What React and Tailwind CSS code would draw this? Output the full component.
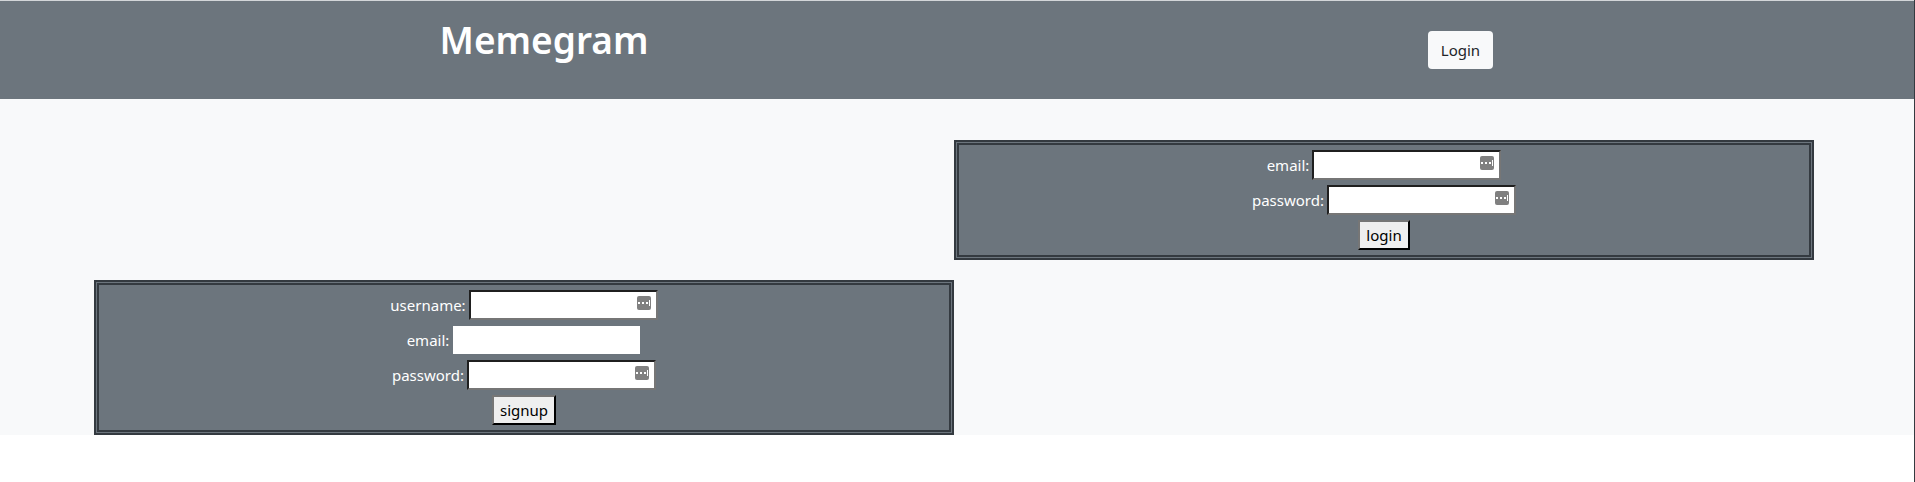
import React from 'react';

const KeyIcon = () => (
  <svg width="14" height="14" viewBox="0 0 14 14" className="absolute right-[7px] top-[6px]">
    <rect width="14" height="14" rx="2" fill="#808080" />
    <rect x="1" y="6" width="2" height="2" fill="#fff" />
    <rect x="5" y="6" width="2" height="2" fill="#fff" />
    <rect x="9" y="6" width="2" height="2" fill="#fff" />
    <rect x="12" y="4" width="1" height="6" fill="#fff" />
  </svg>
);

const Field = ({ label, plain = false }) => (
  <div className="flex h-[30px] items-center justify-center gap-[3px]">
    <label className="text-white">{label}</label>
    {plain ? (
      <input className="mx-[1px] block h-[28px] w-[187px] bg-white" />
    ) : (
      <div className="relative">
        <input className="block h-[30px] w-[189px] border-2 border-t-[#1f1f1f] border-l-[#1f1f1f] border-r-[#767676] border-b-[#767676] bg-white" />
        <KeyIcon />
      </div>
    )}
  </div>
);

const SubmitButton = ({ children }) => (
  <button className="h-[30px] border-2 border-t-[#767676] border-l-[#767676] border-r-black border-b-black bg-[#efefef] px-[6px] text-black">
    {children}
  </button>
);

const Panel = ({ children }) => (
  <form className="flex flex-col items-stretch gap-[5px] border-[5px] border-double border-[#343a40] bg-[#6c757d] p-[5px] text-center">
    {children}
  </form>
);

export default function App() {
  return (
    <div className="min-h-screen border-r border-r-[#343a40] font-['Noto_Sans','Open_Sans',sans-serif] text-[15px]">
      <header className="flex h-[99px] border-t border-t-[#d3d6d9] bg-[#6c757d]">
        <div className="w-[1088px] text-center">
          <h1 className="mt-[15px] text-[37px] leading-[48px] font-semibold text-white">Memegram</h1>
        </div>
        <div className="ml-[340px] flex items-center">
          <button className="h-[38px] w-[65px] rounded bg-[#f8f9fa] text-[#212529]">Login</button>
        </div>
      </header>

      <main className="flex h-[336px] flex-col gap-[20px] bg-[#f8f9fa] pt-[41px] pl-[94px]">
        <div className="grid w-[1720px] grid-cols-2">
          <div />
          <Panel>
            <Field label="email:" />
            <Field label="password:" />
            <div><SubmitButton>login</SubmitButton></div>
          </Panel>
        </div>
        <div className="grid w-[1720px] grid-cols-2">
          <Panel>
            <Field label="username:" />
            <Field label="email:" plain />
            <Field label="password:" />
            <div><SubmitButton>signup</SubmitButton></div>
          </Panel>
          <div />
        </div>
      </main>
    </div>
  );
}
